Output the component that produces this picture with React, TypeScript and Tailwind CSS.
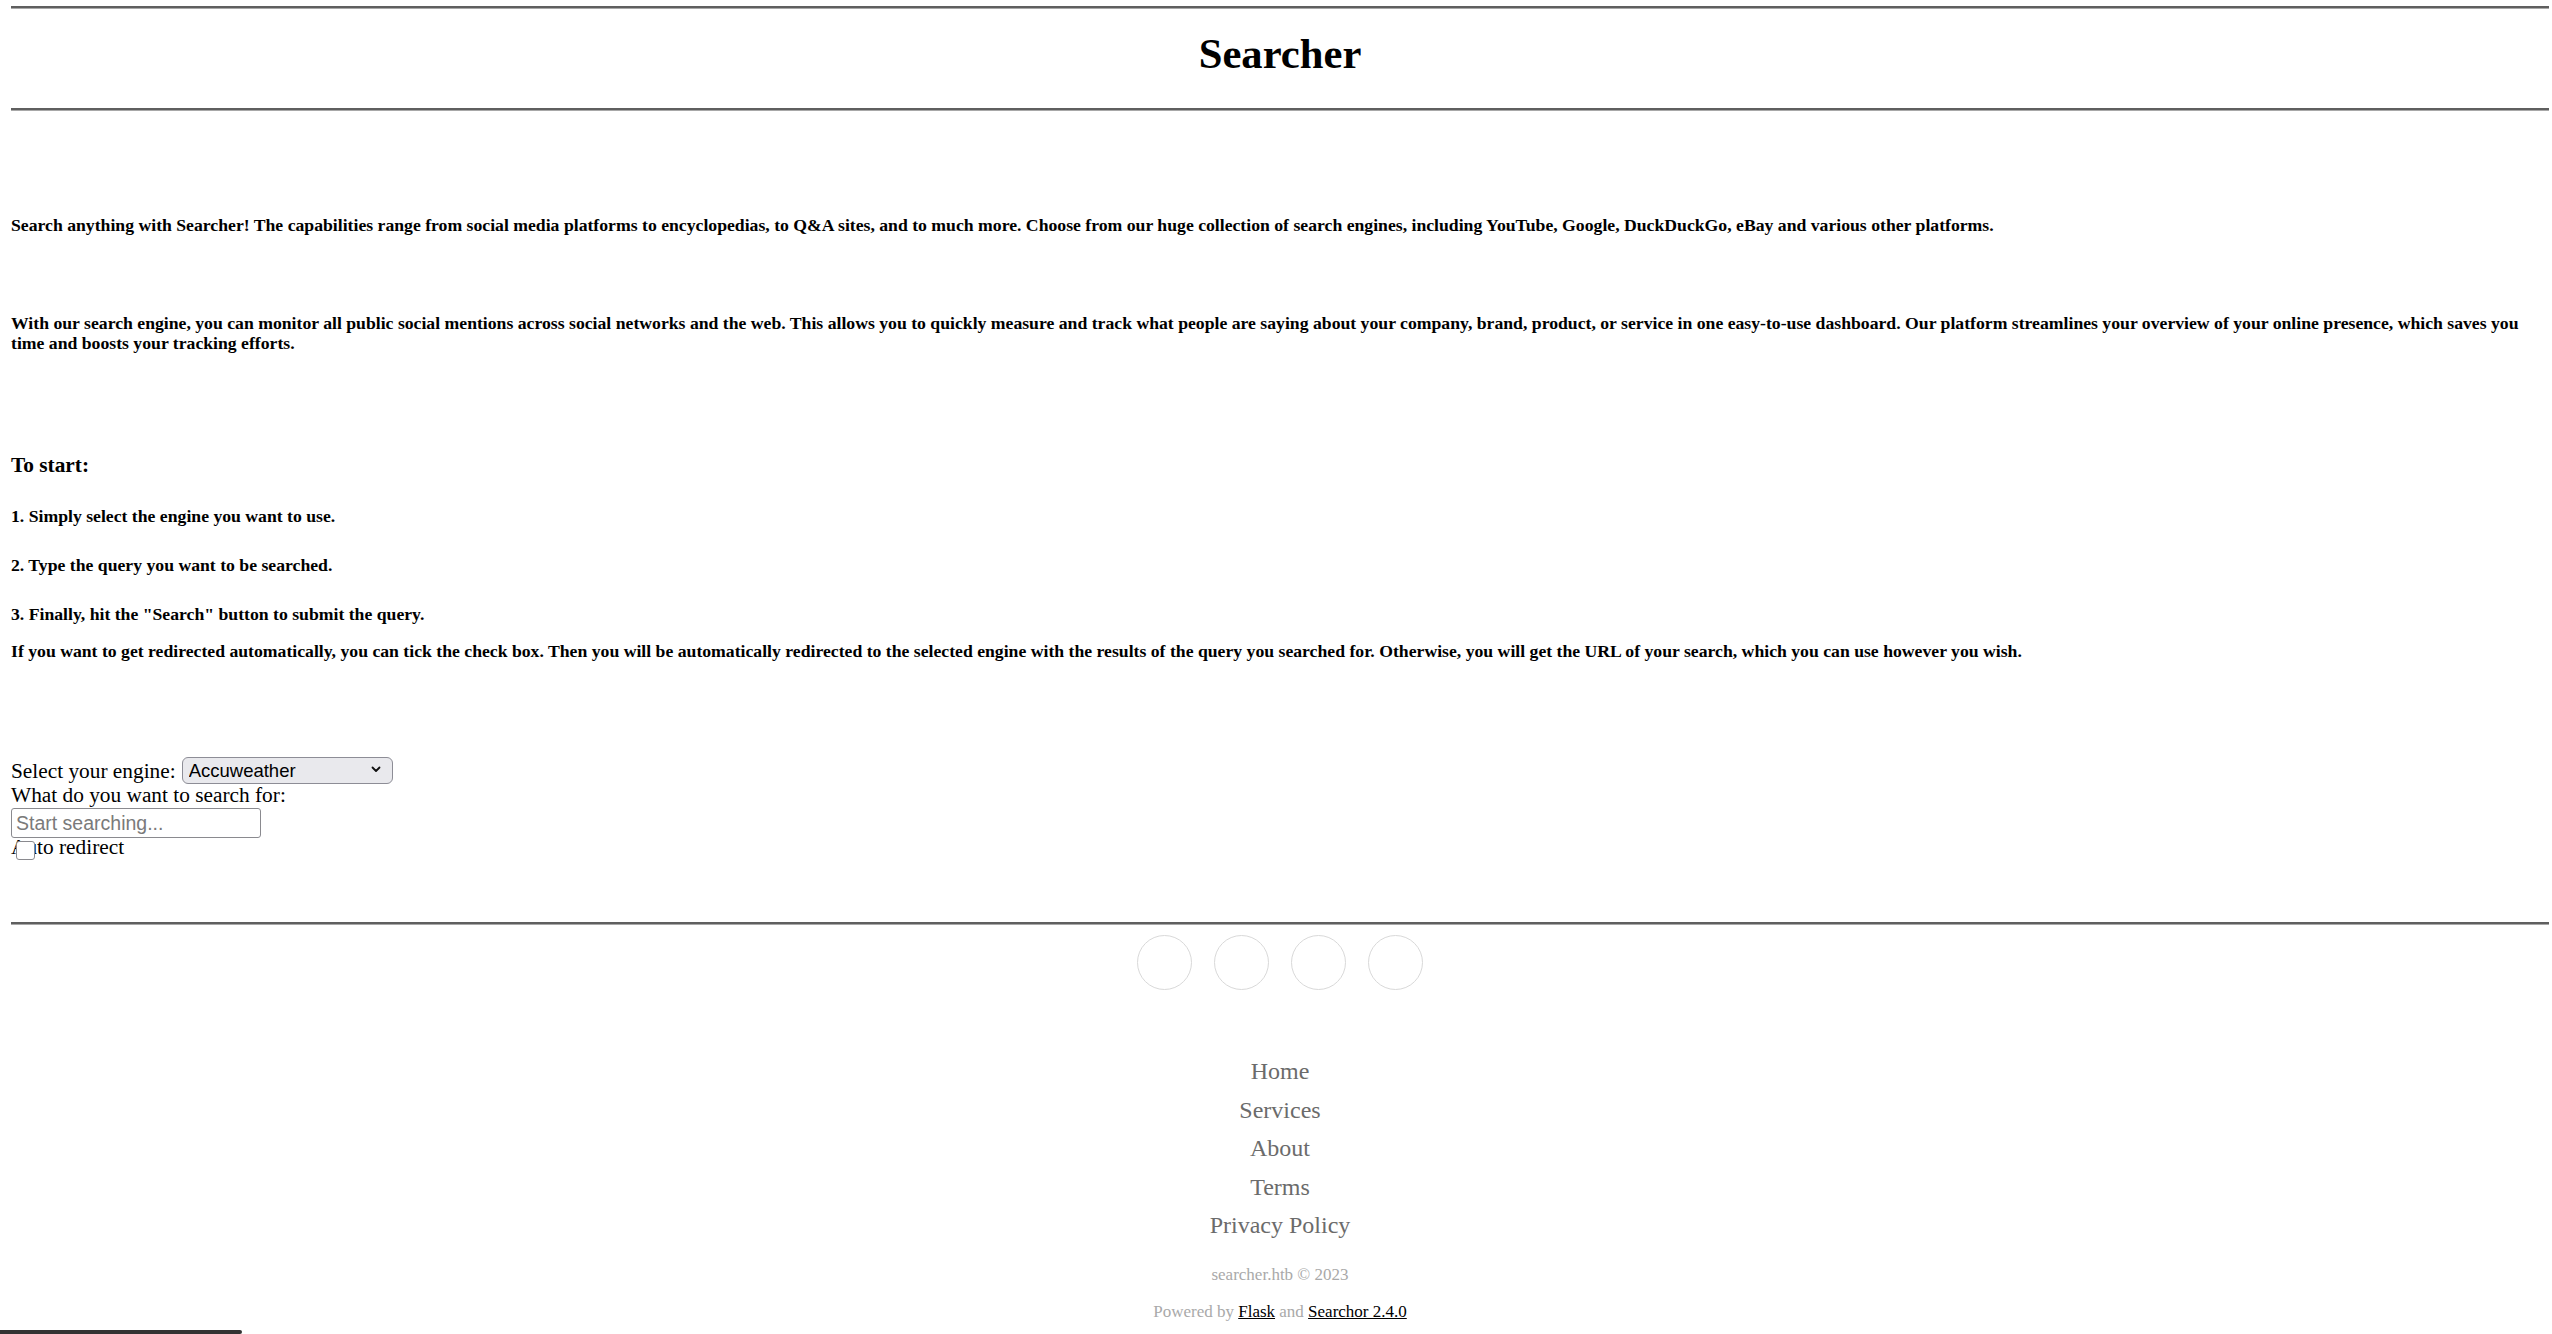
import { useState } from "react";

const SERIF = "font-['Liberation_Serif','Times_New_Roman',serif]";
const SANS = "font-['Liberation_Sans',Arial,sans-serif]";

const STEPS = [
  "1. Simply select the engine you want to use.",
  "2. Type the query you want to be searched.",
  '3. Finally, hit the "Search" button to submit the query.',
];

const LINKS = ["Home", "Services", "About", "Terms", "Privacy Policy"];

function Rule() {
  return <div className="h-[3px] border-t-2 border-b border-t-[#5f5f5f] border-b-[#a8a8a8]" />;
}

export default function App() {
  const [engine, setEngine] = useState("Accuweather");
  const [query, setQuery] = useState("");
  const [redirect, setRedirect] = useState(false);

  return (
    <div className={`${SERIF} relative min-h-[1334px] bg-white text-black`}>
      <div className="ml-[11px] mr-[3px] pt-[6px]">
        <Rule />
        <h1 className="mt-[20px] text-center text-[42.67px] font-bold leading-[50px]">
          Searcher
        </h1>
        <div className="mt-[29px]">
          <Rule />
        </div>

        <p className="mt-[104px] text-[17.7px] font-bold leading-[20px]">
          Search anything with Searcher! The capabilities range from social media platforms to
          encyclopedias, to Q&amp;A sites, and to much more. Choose from our huge collection of
          search engines, including YouTube, Google, DuckDuckGo, eBay and various other platforms.
        </p>
        <p className="mt-[79px] text-[17.7px] font-bold leading-[19.5px]">
          With our search engine, you can monitor all public social mentions across social networks
          and the web. This allows you to quickly measure and track what people are saying about
          your company, brand, product, or service in one easy-to-use dashboard. Our platform
          streamlines your overview of your online presence, which saves you time and boosts your
          tracking efforts.
        </p>

        <h4 className="mt-[100px] text-[21.33px] font-bold leading-[25px]">To start:</h4>
        {STEPS.map((step, i) => (
          <p key={i} className={`${i === 0 ? "mt-[28px]" : "mt-[29px]"} text-[17.7px] font-bold leading-[20px]`}>
            {step}
          </p>
        ))}
        <p className="mt-[17px] text-[17.7px] font-bold leading-[20px]">
          If you want to get redirected automatically, you can tick the check box. Then you will be
          automatically redirected to the selected engine with the results of the query you
          searched for. Otherwise, you will get the URL of your search, which you can use however
          you wish.
        </p>

        <form className="mt-[96px] text-[21.33px]" onSubmit={(e) => e.preventDefault()}>
          <div className="flex h-[28px] items-center">
            <span className="leading-[24px]">Select your engine:</span>
            <div className="relative ml-[6px]">
              <select
                value={engine}
                onChange={(e) => setEngine(e.target.value)}
                className={`${SANS} h-[27px] w-[211px] appearance-none rounded-[6px] border border-[#8d8d96] bg-[#e9e9ed] pl-[6px] text-[18.5px] leading-[25px] text-black outline-none`}
              >
                <option>Accuweather</option>
                <option>Amazon</option>
                <option>DuckDuckGo</option>
                <option>Google</option>
                <option>YouTube</option>
              </select>
              <svg
                className="pointer-events-none absolute right-[12px] top-[11px]"
                width="10"
                height="7"
                viewBox="0 0 10 7"
                fill="none"
              >
                <path d="M1.5 1.5 5 5l3.5-3.5" stroke="#111" strokeWidth="1.8" strokeLinecap="round" strokeLinejoin="round" />
              </svg>
            </div>
          </div>
          <div className="h-[22px] leading-[20px]">What do you want to search for:</div>
          <input
            value={query}
            onChange={(e) => setQuery(e.target.value)}
            placeholder="Start searching..."
            className={`${SANS} mt-[1px] block h-[30px] w-[250px] rounded-[3px] border border-[#8a8a8f] px-[4px] text-[19.5px] text-black outline-none placeholder:text-[#7a7a7a]`}
          />
          <div className="relative h-[20px] leading-[18px]">
            <span>Auto redirect</span>
            <input
              type="checkbox"
              checked={redirect}
              onChange={(e) => setRedirect(e.target.checked)}
              className="absolute left-[5px] top-[3px] m-0 h-[19px] w-[19px] appearance-none rounded-[3px] border border-[#8a8a8f] bg-white"
            />
          </div>
        </form>

        <div className="mt-[64px]">
          <Rule />
        </div>

        <footer className="text-center">
          <div className="mt-[10px] flex justify-center gap-[22px]">
            {[0, 1, 2, 3].map((i) => (
              <a key={i} href="#" className="block h-[55px] w-[55px] rounded-full border border-[#d9d9d9]" />
            ))}
          </div>
          <ul className="mt-[62px] text-[24px] leading-[38.5px] text-[#6b6b6b]">
            {LINKS.map((l) => (
              <li key={l}>
                <a href="#">{l}</a>
              </li>
            ))}
          </ul>
          <p className="mt-[20px] text-[17px] leading-[20px] text-[#a9a9a9]">searcher.htb © 2023</p>
          <p className="mt-[17px] text-[17px] leading-[20px] text-[#a9a9a9]">
            Powered by{" "}
            <a href="#" className="text-black underline">
              Flask
            </a>{" "}
            and{" "}
            <a href="#" className="text-black underline">
              Searchor 2.4.0
            </a>
          </p>
        </footer>
      </div>
      <div className="absolute bottom-0 left-0 h-[4px] w-[242px] rounded-r-full bg-[#333]" />
    </div>
  );
}
